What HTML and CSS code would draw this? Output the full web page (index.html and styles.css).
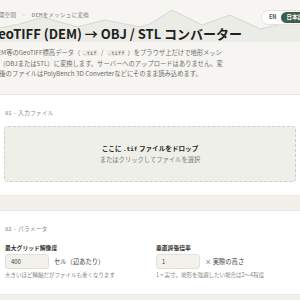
FILE: index.html
```html
<!DOCTYPE html>
<html lang="ja">
<head>
<meta charset="utf-8">
<title>GeoTIFF (DEM) → OBJ / STL コンバーター</title>
<link rel="stylesheet" href="styles.css">
</head>
<body>
<div class="page">
  <header class="hero">
    <svg class="ridge" width="340" height="42" viewBox="0 0 340 42" aria-hidden="true">
      <polygon class="ridge-fill" points="0,30 20,28 40,24 63,17 97,27 125,20 160,27 170,24 192,10 222,25 250,15 280,29 320,20 340,22 340,42 0,42"/>
      <polyline class="ridge-line" points="0,30 20,28 40,24 63,17 97,27 125,20 160,27 170,24 192,10 222,25 250,15 280,29 320,20 340,22"/>
    </svg>
    <div class="hero-top">
      <div class="crumb"><span>地理空間</span><span class="crumb-dot">·</span><span>DEMをメッシュに変換</span></div>
      <div class="lang"><span class="lang-opt">EN</span><span class="lang-opt is-on">日本語</span></div>
    </div>
    <h1 class="title">GeoTIFF (DEM) → OBJ / STL コンバーター</h1>
    <p class="lead">DEM等のGeoTIFF標高データ（<code class="code">.tif</code> / <code class="code">.tiff</code>）をブラウザ上だけで地形メッシ<br>ュ（OBJまたはSTL）に変換します。サーバーへのアップロードはありません。変<br>換後のファイルはPolyBench 3D Converterなどにそのまま読み込めます。</p>
  </header>

  <section class="card">
    <div class="step"><span class="step-num">01</span> · 入力ファイル</div>
    <div class="drop">
      <div class="drop-main">ここに <span class="drop-ext">.tif</span> ファイルをドロップ</div>
      <div class="drop-sub">またはクリックしてファイルを選択</div>
    </div>
  </section>

  <section class="card">
    <div class="step"><span class="step-num">02</span> · パラメータ</div>
    <div class="fields">
      <div class="field">
        <div class="field-label">最大グリッド解像度</div>
        <div class="field-row">
          <div class="input">400</div>
          <span class="unit">セル（辺あたり）</span>
        </div>
        <div class="help">大きいほど精細だがファイルも重くなります</div>
      </div>
      <div class="field">
        <div class="field-label">垂直誇張倍率</div>
        <div class="field-row">
          <div class="input">1</div>
          <span class="unit">× 実際の高さ</span>
        </div>
        <div class="help">1 = 実寸。地形を強調したい場合は2〜4程度</div>
      </div>
    </div>
  </section>
</div>
</body>
</html>
```

FILE: styles.css
```css
html, body {
  margin: 0;
  padding: 0;
}
body {
  background: #f1f0eb;
  overflow: hidden;
  display: flex;
  justify-content: center;
  font-family: "Noto Sans CJK JP", "Noto Sans", sans-serif;
  color: #2a2a27;
}
.page {
  width: 340px;
  flex-shrink: 0;
  display: flex;
  flex-direction: column;
}
.hero {
  position: relative;
  background: #f6f5f1;
  padding: 10px 9px 14px 13px;
}
.ridge {
  position: absolute;
  top: 0;
  left: 0;
  display: block;
}
.ridge-fill {
  fill: #eaece5;
}
.ridge-line {
  fill: none;
  stroke: #d5d9cf;
  stroke-width: 1;
}
.hero-top {
  position: relative;
  display: flex;
  justify-content: space-between;
  align-items: flex-start;
  height: 15px;
}
.crumb {
  display: flex;
  gap: 6px;
  margin-top: 1px;
  font-family: "DejaVu Sans Mono", "Noto Sans CJK JP", monospace;
  font-size: 5.5px;
  line-height: 8px;
  letter-spacing: 0.3px;
  color: #7d7d76;
}
.lang {
  display: flex;
  align-items: center;
  gap: 5px;
  height: 15px;
  box-sizing: border-box;
  padding: 2px;
  padding-left: 7px;
  background: #fff;
  border: 1px solid #e3e2dc;
  border-radius: 999px;
}
.lang-opt {
  font-size: 5.5px;
  font-weight: 700;
  line-height: 11px;
  color: #55554f;
}
.lang-opt.is-on {
  background: #3f5e48;
  color: #fff;
  padding: 0 5px;
  border-radius: 999px;
}
.title {
  position: relative;
  margin: 0 0 0 -4px;
  font-size: 13px;
  line-height: 18px;
  font-weight: 700;
  color: #1f211e;
  white-space: nowrap;
}
.lead {
  position: relative;
  margin: 5px 0 0;
  font-size: 6.3px;
  line-height: 10.5px;
  color: #6e6e68;
  white-space: nowrap;
}
.code {
  font-family: "DejaVu Sans Mono", monospace;
  font-size: 5.5px;
  background: #ecebe5;
  padding: 0 1px;
  margin: 0 2px;
  border-radius: 1px;
}
.card {
  background: #fff;
  border-top: 1px solid #e7e6e0;
  border-bottom: 1px solid #e7e6e0;
  padding: 14px 24px 13px;
}
.card + .card {
  margin-top: 14px;
  padding-bottom: 15px;
}
.step {
  font-size: 5.5px;
  line-height: 8px;
  letter-spacing: 0.4px;
  color: #85857e;
  padding-left: 1px;
}
.step-num {
  font-family: "DejaVu Sans Mono", monospace;
  letter-spacing: 0;
}
.drop {
  margin-top: 9px;
  height: 56px;
  box-sizing: border-box;
  background: #efefe9;
  border: 1px dashed #d0d0c8;
  border-radius: 4px;
  display: flex;
  flex-direction: column;
  align-items: center;
  justify-content: center;
  gap: 3px;
  padding-top: 1px;
}
.drop-main {
  font-size: 6.6px;
  line-height: 8px;
  font-weight: 700;
  color: #2a2a27;
}
.drop-ext {
  font-family: "DejaVu Sans Mono", monospace;
  font-size: 6px;
}
.drop-sub {
  font-size: 6.3px;
  line-height: 8px;
  color: #7a7a73;
}
.fields {
  margin-top: 11px;
  display: grid;
  grid-template-columns: 1fr 1fr;
  column-gap: 10px;
}
.field {
  display: flex;
  flex-direction: column;
  padding-left: 1px;
}
.field-label {
  font-size: 5.8px;
  line-height: 8px;
  font-weight: 700;
  color: #2f2f2b;
}
.field-row {
  margin-top: 2px;
  display: flex;
  align-items: center;
  gap: 5px;
}
.input {
  width: 44px;
  height: 15px;
  box-sizing: border-box;
  background: #f2f1ec;
  border: 1px solid #e1e0d9;
  border-radius: 3px;
  padding-left: 5px;
  font-size: 5.8px;
  line-height: 13px;
  color: #3a3a36;
}
.unit {
  font-size: 6.3px;
  color: #3d3d39;
}
.help {
  margin-top: 2px;
  font-size: 5.5px;
  line-height: 8px;
  color: #85857e;
}
```
